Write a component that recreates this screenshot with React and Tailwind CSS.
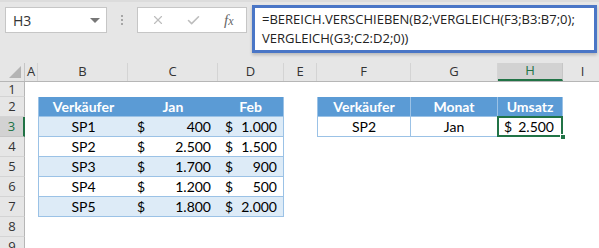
import { X, Check } from "lucide-react";

const cols = [
  { k: "A", w: "w-[13px]" },
  { k: "B", w: "w-[90px]" },
  { k: "C", w: "w-[90px]" },
  { k: "D", w: "w-[66px]" },
  { k: "E", w: "w-[33px]" },
  { k: "F", w: "w-[94px]" },
  { k: "G", w: "w-[87px]" },
  { k: "H", w: "w-[65px]" },
  { k: "I", w: "w-[40px]" },
];

const sales = [
  ["SP1", "400", "1.000"],
  ["SP2", "2.500", "1.500"],
  ["SP3", "1.700", "900"],
  ["SP4", "1.200", "500"],
  ["SP5", "1.800", "2.000"],
];

const RowHead = ({ n, selected }) => (
  <div
    className={
      selected
        ? "w-[25px] shrink-0 flex items-center justify-center bg-[#d2d2d2] border-b border-[#c6c6c6] border-r-2 border-r-[#217346] text-[#217346]"
        : "w-[25px] shrink-0 flex items-center justify-center bg-[#e6e6e6] border-b border-[#d4d4d4] border-r border-r-[#b6b6b6] text-[#333]"
    }
  >
    {n}
  </div>
);

const Money = ({ w, value, pl, pr, cls }) => (
  <div className={`${w} shrink-0 flex items-center justify-between ${pl} ${pr} ${cls}`}>
    <span>$</span>
    <span>{value}</span>
  </div>
);

export default function App() {
  return (
    <div className="w-[599px] h-[248px] overflow-hidden bg-white">
      {/* formula bar */}
      <div className="h-[63px] bg-[#e6e6e6] border-t-2 border-[#dcdcdc] flex items-start font-['Open_Sans',sans-serif] text-[13px] text-[#222]">
        <div className="ml-[5px] mt-[5px] w-[102px] h-[26px] bg-white border border-[#c6c6c6] flex items-center justify-between pl-[7px] pr-[6px]">
          <span className="text-[14px] text-[#333]">H3</span>
          <span className="w-0 h-0 border-l-[5px] border-r-[5px] border-t-[5px] border-l-transparent border-r-transparent border-t-[#777]" />
        </div>
        <div className="ml-[14px] mt-[13px] flex flex-col gap-[2px]">
          <span className="w-[2px] h-[2px] bg-[#a6a6a6]" />
          <span className="w-[2px] h-[2px] bg-[#a6a6a6]" />
          <span className="w-[2px] h-[2px] bg-[#a6a6a6]" />
        </div>
        <div className="ml-[14px] mt-[5px] w-[110px] h-[26px] bg-white border border-[#c6c6c6] flex items-center">
          <X className="ml-[13px] w-[14px] h-[14px] text-[#bdbdbd]" strokeWidth={2} />
          <Check className="ml-[21px] w-[15px] h-[15px] text-[#bdbdbd]" strokeWidth={2.5} />
          <span className="ml-[23px] font-['Liberation_Serif',serif] italic text-[15px] text-[#666]">
            f<span className="text-[12px]">x</span>
          </span>
        </div>
        <div className="ml-[5px] mt-[3px] w-[345px] h-[48px] bg-white border-[3px] border-[#4a76c6] shadow-[0_2px_3px_rgba(0,0,0,0.2)] pl-[7px] pt-[2px] leading-[19px] text-[13px]">
          <div>=BEREICH.VERSCHIEBEN(B2;VERGLEICH(F3;B3:B7;0);</div>
          <div>VERGLEICH(G3;C2:D2;0))</div>
        </div>
      </div>

      {/* column headers */}
      <div className="h-[19px] flex bg-[#e6e6e6] border-b border-[#b6b6b6] font-['Open_Sans',sans-serif] text-[13px] text-[#333]">
        <div className="w-[25px] shrink-0 relative border-r border-[#c6c6c6]">
          <svg className="absolute right-[3px] bottom-[3px]" width="12" height="12" viewBox="0 0 12 12">
            <polygon points="12,0 12,12 0,12" fill="#b4b4b4" />
          </svg>
        </div>
        {cols.map((c) =>
          c.k === "H" ? (
            <div
              key={c.k}
              className={`${c.w} shrink-0 flex items-center justify-center bg-[#d2d2d2] border-r border-[#c6c6c6] border-b-2 border-b-[#217346] text-[#217346]`}
            >
              {c.k}
            </div>
          ) : (
            <div key={c.k} className={`${c.w} shrink-0 flex items-center justify-center border-r border-[#d4d4d4]`}>
              {c.k}
            </div>
          )
        )}
      </div>

      {/* sheet */}
      <div className="font-['Lato',sans-serif] text-[14px] text-black">
        <div className="h-[15px] flex">
          <div className="w-[25px] shrink-0 flex items-end justify-center bg-[#e6e6e6] border-b border-[#d4d4d4] border-r border-r-[#b6b6b6] text-[#333] font-['Open_Sans',sans-serif] text-[13px] leading-[14px]">
            1
          </div>
        </div>

        {/* row 2: headers */}
        <div className="h-[20px] flex">
          <div className="flex font-['Open_Sans',sans-serif] text-[13px]">
            <RowHead n={2} />
          </div>
          <div className="w-[13px] shrink-0" />
          <div className="w-[90px] shrink-0 flex items-center justify-center bg-[#5b9bd5] border-l border-[#9bc2e6] border-b border-b-[#9bc2e6] text-white font-bold">
            Verkäufer
          </div>
          <div className="w-[90px] shrink-0 flex items-center justify-center bg-[#5b9bd5] border-b border-[#9bc2e6] text-white font-bold">
            Jan
          </div>
          <div className="w-[66px] shrink-0 flex items-center justify-center bg-[#5b9bd5] border-r border-[#9bc2e6] border-b border-b-[#9bc2e6] text-white font-bold">
            Feb
          </div>
          <div className="w-[33px] shrink-0" />
          <div className="w-[94px] shrink-0 flex items-center justify-center bg-[#5b9bd5] border-l border-[#9bc2e6] border-r border-r-[#9bc2e6] border-b border-b-[#9bc2e6] text-white font-bold">
            Verkäufer
          </div>
          <div className="w-[87px] shrink-0 flex items-center justify-center bg-[#5b9bd5] border-r border-[#9bc2e6] border-b border-b-[#9bc2e6] text-white font-bold">
            Monat
          </div>
          <div className="w-[65px] shrink-0 flex items-center justify-center bg-[#5b9bd5] border-r border-[#9bc2e6] border-b border-b-[#9bc2e6] text-white font-bold">
            Umsatz
          </div>
        </div>

        {/* rows 3-7 */}
        {sales.map((r, i) => {
          const n = i + 3;
          const bg = n % 2 === 1 ? "bg-[#ddebf7]" : "bg-white";
          return (
            <div key={n} className="h-[20px] flex">
              <div className="flex font-['Open_Sans',sans-serif] text-[13px]">
                <RowHead n={n} selected={n === 3} />
              </div>
              <div className="w-[13px] shrink-0" />
              <div className={`w-[90px] shrink-0 flex items-center justify-center ${bg} border-l border-[#9bc2e6] border-b border-b-[#9bc2e6]`}>
                {r[0]}
              </div>
              <Money w="w-[90px]" value={r[1]} pl="pl-[9px]" pr="pr-[7px]" cls={`${bg} border-b border-[#9bc2e6]`} />
              <Money w="w-[66px]" value={r[2]} pl="pl-[7px]" pr="pr-[6px]" cls={`${bg} border-r border-[#9bc2e6] border-b border-b-[#9bc2e6]`} />
              {n === 3 && (
                <>
                  <div className="w-[33px] shrink-0" />
                  <div className="w-[94px] shrink-0 flex items-center justify-center bg-white border-l border-[#9bc2e6] border-r border-r-[#9bc2e6] border-b border-b-[#9bc2e6]">
                    SP2
                  </div>
                  <div className="w-[87px] shrink-0 flex items-center justify-center bg-white border-r border-[#9bc2e6] border-b border-b-[#9bc2e6]">
                    Jan
                  </div>
                  <div className="w-[65px] shrink-0 relative flex items-center justify-between pl-[6px] pr-[8px] bg-white border-r border-[#9bc2e6] border-b border-b-[#9bc2e6]">
                    <span>$</span>
                    <span>2.500</span>
                    <span className="absolute -left-[1px] -top-[1px] -right-[1px] -bottom-[1px] border-2 border-[#217346]" />
                    <span className="absolute -right-[4px] -bottom-[4px] w-[6px] h-[6px] bg-[#217346] border border-white" />
                  </div>
                </>
              )}
            </div>
          );
        })}

        {[8, 9].map((n) => (
          <div key={n} className="h-[20px] flex">
            <div className="flex font-['Open_Sans',sans-serif] text-[13px]">
              <RowHead n={n} />
            </div>
          </div>
        ))}
      </div>
    </div>
  );
}
